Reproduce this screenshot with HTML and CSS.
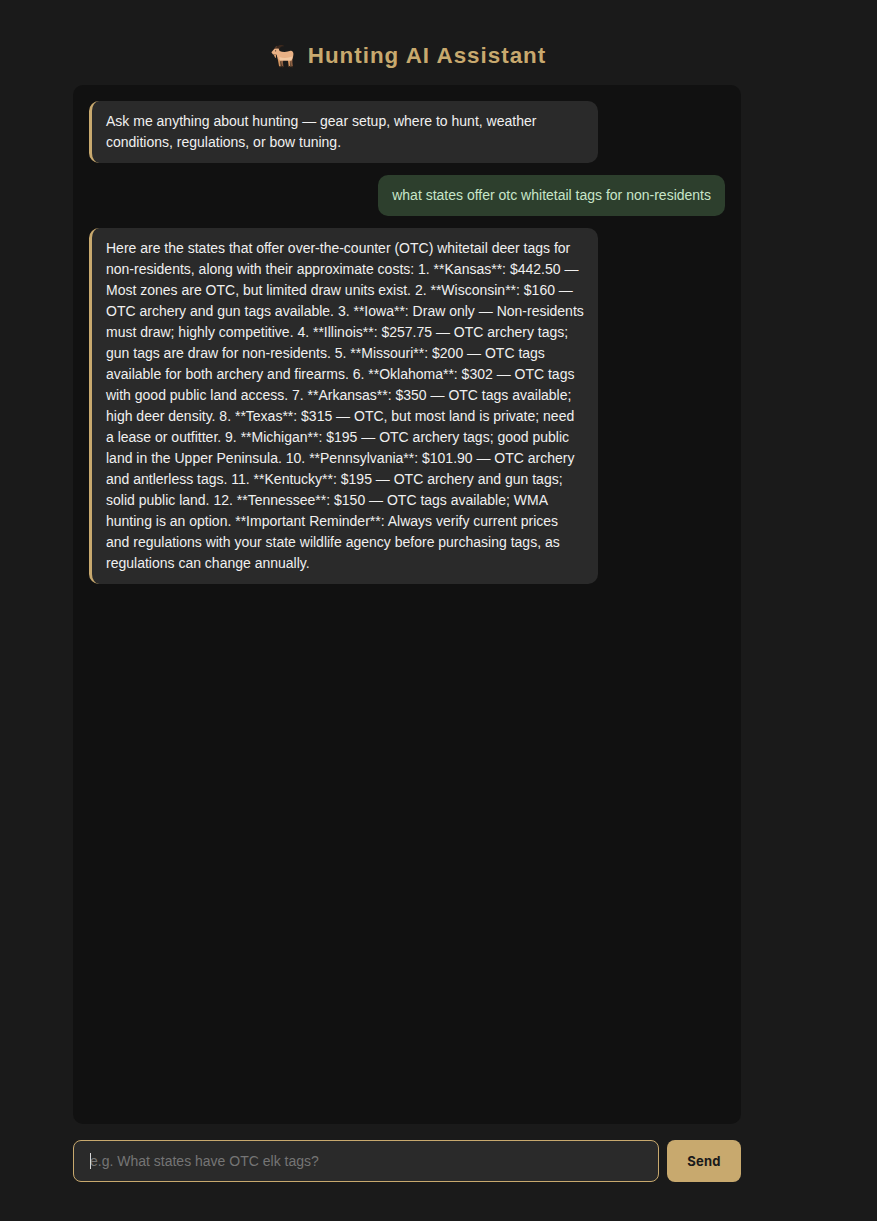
FILE: index.html
```html
<!DOCTYPE html>
<html lang="en">
<head>
  <meta charset="UTF-8" />
  <meta name="viewport" content="width=device-width, initial-scale=1.0"/>
  <title>Hunting AI Assistant</title>
  <link rel="stylesheet" href="styles.css">
</head>
<body>

  <div class="app">
    <h1 class="title">
      <!-- goat emoji, drawn by hand -->
      <svg class="goat" viewBox="0 0 24 24" width="24" height="24" aria-hidden="true">
        <path d="M6 5 C6 2.5 8.5 .8 12 1 C13.2 1.1 14 1.8 14.4 2.6 C12.5 2 10.5 2.4 9.4 5 Z" fill="#3b281d"/>
        <path d="M4.5 5 C4.6 3.4 5.8 2 7.6 1.8 C6.8 3 6.6 4 6.8 5 Z" fill="#553a2a"/>
        <path d="M7.5 14 L11 14 L10.4 18.5 L10.8 23 L9.2 23 L8.4 18.5 Z" fill="#d0935f"/>
        <path d="M17.5 14 L21 14 L20.4 18.5 L20.4 23 L18.8 23 L18.2 18.5 Z" fill="#d0935f"/>
        <path d="M11 14 L13.6 14 L13 18.5 L13.4 23 L11.8 23 L11 18.5 Z" fill="#8c5f42"/>
        <path d="M20 14 L22.6 14 L22.4 18.5 L23 23 L21.4 23 L20.6 18.5 Z" fill="#8c5f42"/>
        <path d="M1.4 8.2 L4.4 4.8 L8.6 4.6 L9.6 7 C12.5 8.2 17 8.2 20.5 6.8 C22.6 6.6 23.6 8.4 23.4 10.6 C23.2 13.2 22.6 15.4 21.4 16.4 L10 16.4 C8.2 15.6 7.2 14 6.8 11.2 L6 10.2 L3 10.6 Z" fill="#e9b185"/>
        <path d="M9.5 13 C13 14.4 18 14.2 22.4 12.6 C22.2 14.4 21.8 15.6 21.4 16.4 L10 16.4 Z" fill="#f3c9a2"/>
        <path d="M3.6 10.5 L6 10.2 L6 14 L5 13.6 Z" fill="#d99c6c"/>
        <circle cx="5.6" cy="6.8" r=".6" fill="#3b281d"/>
        <rect x="9.2" y="22" width="1.6" height="1.4" fill="#3b281d"/>
        <rect x="18.8" y="22" width="1.6" height="1.4" fill="#3b281d"/>
        <rect x="11.8" y="22" width="1.6" height="1.4" fill="#3b281d"/>
        <rect x="21.4" y="22" width="1.6" height="1.4" fill="#3b281d"/>
      </svg>
      <span>Hunting AI Assistant</span>
    </h1>

    <div class="chat">
      <div class="msg bot">Ask me anything about hunting — gear setup, where to hunt, weather conditions, regulations, or bow tuning.</div>
      <div class="msg user">what states offer otc whitetail tags for non-residents</div>
      <div class="msg bot">Here are the states that offer over-the-counter (OTC) whitetail deer tags for non-residents, along with their approximate costs: 1. **Kansas**: $442.50 — Most zones are OTC, but limited draw units exist. 2. **Wisconsin**: $160 — OTC archery and gun tags available. 3. **Iowa**: Draw only — Non-residents must draw; highly competitive. 4. **Illinois**: $257.75 — OTC archery tags; gun tags are draw for non-residents. 5. **Missouri**: $200 — OTC tags available for both archery and firearms. 6. **Oklahoma**: $302 — OTC tags with good public land access. 7. **Arkansas**: $350 — OTC tags available; high deer density. 8. **Texas**: $315 — OTC, but most land is private; need a lease or outfitter. 9. **Michigan**: $195 — OTC archery tags; good public land in the Upper Peninsula. 10. **Pennsylvania**: $101.90 — OTC archery and antlerless tags. 11. **Kentucky**: $195 — OTC archery and gun tags; solid public land. 12. **Tennessee**: $150 — OTC tags available; WMA hunting is an option. **Important Reminder**: Always verify current prices and regulations with your state wildlife agency before purchasing tags, as regulations can change annually.</div>
    </div>

    <div class="input-row">
      <div class="input-wrap">
        <input type="text" class="chat-input" placeholder="e.g. What states have OTC elk tags?">
        <span class="caret"></span>
      </div>
      <button class="send">Send</button>
    </div>
  </div>

</body>
</html>
```

FILE: styles.css
```css
body {
  font-family: "Liberation Sans", Arial, sans-serif;
  background: #1a1a1a;
  color: #f0f0f0;
  margin: 0;
  padding: 0;
}

.app {
  width: 668px;
  height: 1221px;
  margin-left: 73px;
  padding: 29px 0 39px;
  box-sizing: border-box;
  display: flex;
  flex-direction: column;
}

.title {
  display: flex;
  align-items: center;
  justify-content: center;
  gap: 14px;
  height: 56px;
  padding: 0 0 2px 2px;
  margin: 0;
  box-sizing: border-box;
  font-size: 22.4px;
  letter-spacing: 1px;
  color: #c8a96e;
}

.goat {
  flex: none;
}

.chat {
  flex: 1;
  background: #111111;
  border-radius: 10px;
  padding: 16px;
  display: flex;
  flex-direction: column;
  gap: 12px;
}

.msg {
  max-width: 80%;
  padding: 10px 14px;
  border-radius: 10px;
  font-size: 14px;
  line-height: 21px;
  box-sizing: border-box;
}

.bot {
  align-self: flex-start;
  background: #2a2a2a;
  border-left: 3px solid #c8a96e;
  color: #f0f0f0;
}

.user {
  align-self: flex-end;
  background: #2d3f2d;
  color: #c8e6c9;
}

.input-row {
  display: flex;
  gap: 8px;
  margin-top: 16px;
}

.input-wrap {
  flex: 1;
  position: relative;
  display: flex;
}

.chat-input {
  flex: 1;
  height: 42px;
  padding: 0 16px;
  box-sizing: border-box;
  background: #2a2a2a;
  border: 1px solid #c8a96e;
  border-radius: 8px;
  color: #f0f0f0;
  font-family: inherit;
  font-size: 14px;
  outline: none;
}

.chat-input::placeholder {
  color: #757575;
}

.caret {
  position: absolute;
  left: 17px;
  top: 13px;
  width: 1px;
  height: 16px;
  background: #d8d8d8;
}

.send {
  width: 74px;
  height: 42px;
  background: #c8a96e;
  color: #1a1a1a;
  border: none;
  border-radius: 8px;
  font-family: Inter, sans-serif;
  font-size: 13px;
  font-weight: 700;
  letter-spacing: 0.2px;
  cursor: pointer;
}
```
